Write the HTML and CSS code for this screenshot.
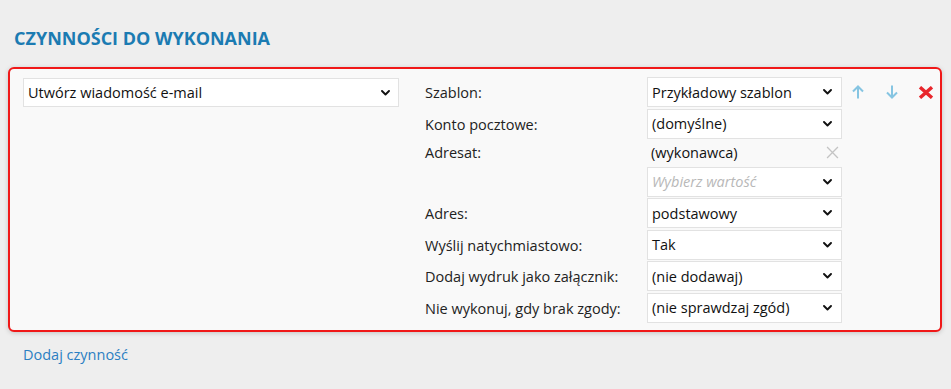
FILE: index.html
```html
<!DOCTYPE html>
<html lang="pl">
<head>
<meta charset="utf-8">
<link rel="stylesheet" href="styles.css">
</head>
<body>
<h2 class="title">CZYNNOŚCI DO WYKONANIA</h2>
<div class="card">
  <div class="left">
    <div class="select wide"><span>Utwórz wiadomość e-mail</span><svg class="chev" viewBox="0 0 9 6"><polyline points="1,1 4.5,4.5 8,1"/></svg></div>
  </div>
  <div class="form">
    <div class="label">Szablon:</div>
    <div class="select"><span>Przykładowy szablon</span><svg class="chev" viewBox="0 0 9 6"><polyline points="1,1 4.5,4.5 8,1"/></svg></div>
    <div class="actions">
      <svg class="arrow up" viewBox="0 0 12 14"><path d="M6 13.5V1.5M1 6.5l5-5 5 5"/></svg>
      <svg class="arrow down" viewBox="0 0 12 14"><path d="M6 0.5v12M1 7.5l5 5 5-5"/></svg>
      <svg class="del" viewBox="0 0 16 13"><path d="M2 1.2l12 10.6M14 1.2L2 11.8"/></svg>
    </div>

    <div class="label">Konto pocztowe:</div>
    <div class="select"><span>(domyślne)</span><svg class="chev" viewBox="0 0 9 6"><polyline points="1,1 4.5,4.5 8,1"/></svg></div>
    <div></div>

    <div class="label short">Adresat:</div>
    <div class="value"><span>(wykonawca)</span><svg class="clear" viewBox="0 0 12 12"><path d="M1 1l10 10M11 1L1 11"/></svg></div>
    <div></div>

    <div></div>
    <div class="select"><span class="ph">Wybierz wartość</span><svg class="chev" viewBox="0 0 9 6"><polyline points="1,1 4.5,4.5 8,1"/></svg></div>
    <div></div>

    <div class="label">Adres:</div>
    <div class="select"><span>podstawowy</span><svg class="chev" viewBox="0 0 9 6"><polyline points="1,1 4.5,4.5 8,1"/></svg></div>
    <div></div>

    <div class="label">Wyślij natychmiastowo:</div>
    <div class="select"><span>Tak</span><svg class="chev" viewBox="0 0 9 6"><polyline points="1,1 4.5,4.5 8,1"/></svg></div>
    <div></div>

    <div class="label">Dodaj wydruk jako załącznik:</div>
    <div class="select"><span>(nie dodawaj)</span><svg class="chev" viewBox="0 0 9 6"><polyline points="1,1 4.5,4.5 8,1"/></svg></div>
    <div></div>

    <div class="label">Nie wykonuj, gdy brak zgody:</div>
    <div class="select"><span>(nie sprawdzaj zgód)</span><svg class="chev" viewBox="0 0 9 6"><polyline points="1,1 4.5,4.5 8,1"/></svg></div>
    <div></div>
  </div>
</div>
<a class="add" href="#">Dodaj czynność</a>
</body>
</html>
```

FILE: styles.css
```css
* { box-sizing: border-box; }
html, body { margin: 0; padding: 0; }
body {
  background: #eeeeee;
  font-family: "Open Sans", "Noto Sans", sans-serif;
  font-size: 14.5px;
  color: #222;
  padding: 0 9px 0 8px;
}
.title {
  margin: 0;
  padding: 26px 0 0 6px;
  height: 67px;
  font-size: 18px;
  font-weight: 700;
  color: #1b7bb2;
}
.card {
  display: flex;
  align-items: flex-start;
  background: #f9f9f9;
  border: 2px solid #f01818;
  border-radius: 6px;
  box-shadow: 0 1px 5px rgba(0,0,0,0.18);
  padding: 8px 8px 8px 13px;
  height: 265px;
}
.left { width: 376px; flex: none; padding-top: 1px; }
.select {
  display: flex;
  align-items: center;
  justify-content: space-between;
  height: 30px;
  background: #fff;
  border: 1px solid #e2e2e2;
  padding: 0 9px 0 4px;
  color: #111;
  white-space: nowrap;
}
.select.wide { height: 29px; padding-right: 8px; }
.chev {
  width: 9px;
  height: 6px;
  fill: none;
  stroke: #111;
  stroke-width: 1.9;
  stroke-linecap: round;
  stroke-linejoin: round;
}
.ph { color: #b8b8b8; font-style: italic; }
.form {
  margin-left: 26px;
  display: grid;
  grid-template-columns: 222px 195px auto;
  grid-template-rows: 30px 30px 25px 30px 30px 30px 30px 30px;
  row-gap: 1.5px;
  align-items: center;
}
.label { color: #222; padding-top: 1px; white-space: nowrap; }
.label.short { align-self: start; padding-top: 3px; }
.value {
  display: flex;
  align-items: center;
  justify-content: space-between;
  height: 25px;
  padding: 0 3px 0 4px;
  color: #111;
}
.clear {
  width: 13px;
  height: 13px;
  fill: none;
  stroke: #c4c4c4;
  stroke-width: 1.2;
}
.actions {
  display: flex;
  align-items: center;
  padding-left: 10px;
}
.arrow {
  flex: none;
  width: 12px;
  height: 14px;
  fill: none;
  stroke: #86c5e2;
  stroke-width: 2;
}
.arrow.up { margin-right: 22px; }
.arrow.down { margin-right: 20px; }
.del {
  flex: none;
  width: 16px;
  height: 13px;
  fill: none;
  stroke: #e8262c;
  stroke-width: 3.4;
}
.add {
  display: inline-block;
  margin: 13px 0 0 15px;
  color: #2b7fc2;
  text-decoration: none;
  font-size: 14.5px;
}
```
